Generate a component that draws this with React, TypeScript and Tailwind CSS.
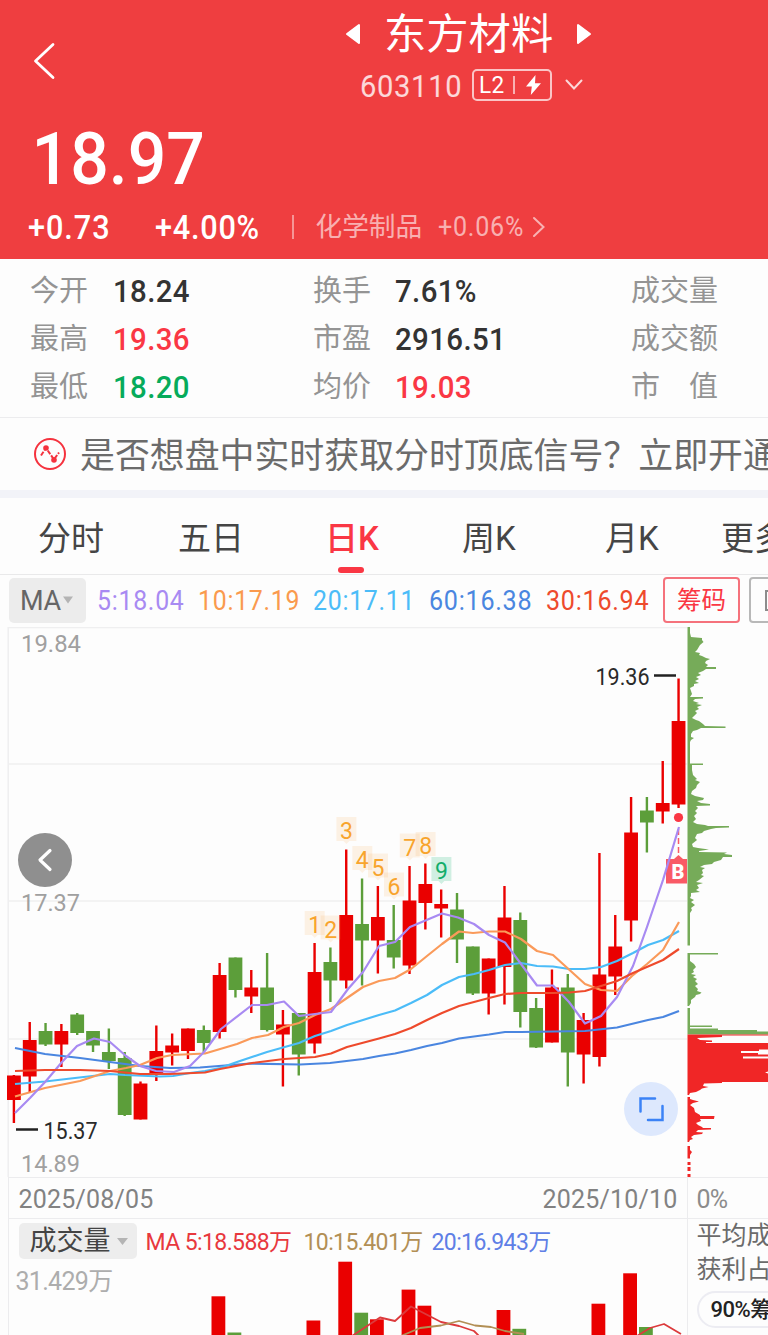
const RED = "#ea0000";
const GREEN = "#5c9e3a";

// [wick top, body top, body bottom, wick bottom, rising]
const candles: [number, number, number, number, boolean][] = [
  [1075, 1075.5, 1100, 1123, true],
  [1022, 1040, 1076.5, 1092, true],
  [1023, 1031, 1044.5, 1046, false],
  [1024, 1031, 1044.5, 1067, true],
  [1013, 1014.5, 1033, 1035, false],
  [1031, 1031, 1045.5, 1052, false],
  [1028.5, 1052, 1061, 1069, false],
  [1052, 1058, 1115, 1116, false],
  [1081.5, 1083.5, 1119.5, 1119.5, true],
  [1025.5, 1051, 1073.5, 1081, true],
  [1033.5, 1045.5, 1052.5, 1065.5, true],
  [1028.5, 1028.5, 1051, 1059, true],
  [1025.5, 1030, 1043, 1052, false],
  [963, 975, 1032, 1038.5, true],
  [957.5, 957.5, 990, 997.5, false],
  [970, 987.5, 996.5, 1013, true],
  [953, 987.5, 1030, 1031.5, false],
  [1010, 1024.5, 1034.5, 1086.5, true],
  [1013, 1013, 1054.5, 1075.5, false],
  [943, 972, 1043.5, 1053.5, true],
  [947.5, 962, 980.5, 1002, false],
  [849.5, 915, 980.5, 988.5, true],
  [878.5, 924, 940.5, 985.5, false],
  [886, 917, 940.5, 973.5, true],
  [905, 940, 957.5, 968.5, false],
  [866, 900.5, 965.5, 974, true],
  [863.5, 884, 903, 929.5, true],
  [889.5, 904, 908.5, 937.5, true],
  [893, 909.5, 939.5, 963, false],
  [946.5, 946.5, 993.5, 995, false],
  [958.5, 958.5, 993.5, 1014.5, true],
  [886, 917.5, 967, 1004.5, true],
  [912.5, 920, 1012, 1027.5, false],
  [998, 1008, 1047.5, 1048, false],
  [969.5, 987.5, 1042.5, 1042.5, true],
  [974, 987.5, 1052.5, 1086.5, false],
  [1013, 1020, 1054.5, 1083.5, true],
  [853, 974.5, 1057, 1066.5, true],
  [915, 946.5, 976.5, 995, true],
  [797, 832.5, 920.5, 941.5, true],
  [797, 810.5, 822.5, 852.5, false],
  [761, 803, 811.5, 823.5, true],
  [678.5, 721, 804.5, 808, true],
];

const maLines = [
  {
    color: "#4a86e0",
    points:
      "15,1048 45,1054 80,1058 110,1062 140,1066 170,1068 200,1067.5 250,1063.5 300,1064.5 330,1063 363,1059 379,1056 395,1053.5 411,1050 427,1046 442,1043 459,1038.5 489,1034.5 505,1032 521,1032 553,1031.5 585,1031 617,1027.5 648,1020 663,1017 679,1011",
  },
  {
    color: "#4bbcf8",
    points:
      "15,1084 45,1081.5 75,1078 110,1074 125,1075 160,1076.5 173,1076 190,1073 205,1071 220,1068 237,1062 267,1052 283,1047.5 299,1043 315,1036 331,1031 347,1025 363,1020 379,1015 395,1010.5 411,1003 427,995 442,985 459,977 474,974 489,970 505,965 521,963 537,966 553,966.5 569,969 585,969 601,967 617,961 633,953 648,945 663,940 679,931",
  },
  {
    color: "#fa9a5a",
    points:
      "15,1096.5 45,1088 80,1081 110,1071 126,1068 140,1065 157,1058 172,1055 205,1053.5 237,1044 252,1038 268,1035 284,1027 299,1023 315,1015 331,1009 363,987 379,981 395,978 411,969 427,956 442,944 459,931.5 473,933 489,931.5 505,931.5 521,939 537,951 553,955 569,969.5 585,984 601,990 617,991 632,976 647,964 663,950 679,922",
  },
  {
    color: "#a88af2",
    points:
      "15,1113 30,1098 46,1081 62,1062 77,1046 94,1038.5 110,1042 126,1056 140,1066 156,1071 174,1072 190,1066 204,1052 221,1029 252,1005 267,1005 284,1001.5 299,1016 315,1014 331,1012 348,989 363,972 379,946 395,942 410,927 442,913.5 458,917.5 474,924 489,935 505,942.5 521,964 537,985.5 553,985.5 569,1002 585,1023.5 601,1016 617,997 633,966 647,927 663,880 679,827",
  },
  {
    color: "#ee4a2c",
    points:
      "15,1071 45,1070 80,1070 110,1071 140,1074 170,1074 205,1072.5 220,1069 252,1063 284,1059 315,1057 331,1053.5 347,1047 379,1038.5 395,1034 411,1028 427,1020 442,1013 459,1006 489,998 505,994 521,993 553,993 569,992.5 585,991 601,986 617,981 633,973 663,960 679,949",
  },
];

const marks: [string, number, number][] = [
  ["1", 304.7, 911],
  ["2", 320.6, 915.5],
  ["3", 336.4, 817],
  ["4", 352.3, 846],
  ["5", 368, 853.5],
  ["6", 384, 872.5],
  ["7", 399.8, 833.5],
  ["8", 415.6, 832],
  ["9", 431.4, 857],
];

const chipsGreen = [
  "687.5,627 690,627 690,633 691,637 702,638 702,640 703.5,642 700,645 697,650 695,652 700,653 699,655 702,656 706,658 710,659 706,661 705,663 708,665 706,667 716,667 716,669 706,669 703,671 698,673 701,675 696,677 699,679 695,681 699,683 694,684 694,686 690,688 691,691 692,694 690,697 703,697 703,698.5 695,699 693,701 699,703 696,704 702,705 697,707 699,709 695,711 697,713 694,716 692,718 696,720 699,721 703,724 705,726 725.5,726.5 725.5,728 701,728 697,730 693,731 691,734 691,737 694,738 691,740 690,742 690,763.5 703,763.5 703,765 692,765 692,770 693,775 697,779 695,780 700,782 697,785 696,788 692,791 691,794 695,796 704,798 703,800 697,801 701,803 710,804 710,805.5 696,806 698,808 695,811 697,813 694,816 696,819 693,822 697,824 705,825 708,826 729,826 729,827.5 716,828 711,829 704,831 702,833 697,834 695,838 697,840 692,844 693,847 698,848 709,849.5 699,851 699,852 727,852.5 724,854 732,855 732,857 723,857 721,860 714,862 712,864 704,865 700,867 705,868 702,870 703,873 701,875 704,876 699,880 696,882 703,883 697,885 699,888 696,890 700,892 691,893 691,896 690,898 694,900 691,902 695,905 691,908 692,910 690,913 690,945.5 687.5,945.5",
  "687.5,953 718,953 718,954.5 690,954.5 690,961 694,964 696,967 693,970 694,972 691,974 696,975 693,977 697,979 695,981 698,984 695,986 698,989 697,991 701.5,992.5 700,994 696,995 695,997 691,1000 691,1003 689,1006 687.5,1006",
  "687.5,1008 690,1008 690,1025.5 712,1025.5 712,1027 690,1027 690,1028.5 718,1028.5 718,1030 757,1030 757,1031.5 768,1031.5 768,1034.5 687.5,1034.5",
];

const chipsRed = [
  "687.5,1034.5 768,1034.5 768,1035.5 722,1035.5 722,1037 697,1038 700,1040 712,1040.5 712,1042 706,1042 706,1043 768,1043 768,1049.5 759,1049.5 759,1051 741,1051 741,1053 758,1053 758,1054.5 768,1054.5 768,1056.5 743,1056.5 743,1058.5 768,1058.5 768,1071.5 765,1072.5 768,1073.5 768,1082 722,1082 722,1083 704,1083.5 703,1086 708.5,1087 702,1088.5 700,1090 696,1092 690,1093 689,1095 687.5,1095",
  "687.5,1097 690,1097 690,1099 693,1100 699,1101.5 693,1103 690,1105 694,1108 695,1112 700,1115 700,1116 714.5,1116 714,1119 700,1119 701,1121 696,1123 698,1125 702,1127 703,1128 711,1128 711,1129.5 698,1130 696,1132 703,1132.5 702,1134 694,1135 691,1137 693,1139 690,1140 689,1142 687.5,1142",
  "687.5,1146 690,1146 690,1150 692,1152 690,1155 690,1158.5 687.5,1158.5",
];

// [left, top, rising]
const volumes: [number, number, boolean][] = [
  [211.5, 1296.3, true],
  [227.5, 1332.5, false],
  [306.5, 1320.5, true],
  [338.3, 1261.7, true],
  [354.3, 1312.7, false],
  [370, 1319.3, true],
  [401.6, 1289.6, true],
  [417.5, 1305.7, true],
  [496.6, 1310, true],
  [512.4, 1328.8, false],
  [591.5, 1303.7, true],
  [623.2, 1273.3, true],
  [639, 1327, false],
];

const Header = () => {
  return (
    <header className="flex h-[259px] flex-col bg-[#ef3e40] text-white">
      <div className="flex h-[104px] pt-[10px]">
        <svg className="mt-[32px] ml-[32px] h-[38px] w-[24px]" viewBox="0 0 24 38" fill="none">
          <path d="M21 2.500 3.500 19 21 35.500" stroke="white" strokeWidth="2.800" strokeLinecap="round" strokeLinejoin="round" />
        </svg>
        <div className="ml-[289px]">
          <div className="flex h-[48px] items-center">
            <svg className="h-[22px] w-[16px]" viewBox="0 0 16 22">
              <path d="M14 2v18L2 11Z" fill="white" stroke="white" strokeWidth="2" strokeLinejoin="round" />
            </svg>
            <h1 className="mt-[2px] ml-[23px] w-[169px] text-[42.3px] leading-[48px] font-normal whitespace-nowrap">东方材料</h1>
            <svg className="ml-[23px] h-[22px] w-[16px]" viewBox="0 0 16 22">
              <path d="M2 2v18l12-9Z" fill="white" stroke="white" strokeWidth="2" strokeLinejoin="round" />
            </svg>
          </div>
          <div className="mt-[8px] flex h-[38px] items-center">
            <span className="mt-[4px] ml-[15px] w-[112px] origin-left scale-x-94 text-[31px] tracking-[0.7px] text-white/80">603110</span>
            <div className="flex h-[32px] w-[80px] items-center rounded-[5px] border-2 border-white/70">
              <span className="ml-[5px] w-[34px] origin-left scale-x-94 text-[24px] tracking-[0.5px]">L2</span>
              <span className="h-[18px] w-[1.5px] bg-white/60" />
              <svg className="ml-[10px] h-[20px] w-[17px]" viewBox="0 0 17 20">
                <path d="M10.500 0 1 11.500h5.800L5.800 20 16 8.200h-6Z" fill="white" />
              </svg>
            </div>
            <svg className="ml-[12px] h-[14px] w-[20px]" viewBox="0 0 20 14" fill="none">
              <path d="m2.500 2.500 7.500 8 7.500-8" stroke="white" strokeOpacity="0.8" strokeWidth="2" strokeLinecap="round" />
            </svg>
          </div>
        </div>
      </div>
      <div className="mt-[18px] h-[77px] origin-left scale-x-93 pl-[34px] text-[73px] leading-[74px] font-medium">18.97</div>
      <div className="flex h-[56px] items-center font-medium">
        <span className="mt-[2px] ml-[28px] w-[127px] origin-left scale-x-93 text-[33px] tracking-[1px]">+0.73</span>
        <span className="mt-[2px] w-[137px] origin-left scale-x-93 text-[33px] tracking-[0.8px]">+4.00%</span>
        <span className="h-[24px] w-[1.5px] bg-white/45" />
        <div className="flex items-center font-normal text-white/60">
          <span className="ml-[22px] w-[122px] text-[26.700px]">化学制品</span>
          <span className="w-[94px] origin-left scale-x-93 text-[27px] tracking-[0.8px]">+0.06%</span>
          <svg className="h-[22px] w-[14px]" viewBox="0 0 14 22" fill="none">
            <path d="m2 2 9.500 9L2 20" stroke="currentColor" strokeWidth="2" strokeLinecap="round" />
          </svg>
        </div>
      </div>
    </header>
  );
};

const Stats = () => {
  const rows = [
    ["今开", "18.24", "text-[#333]", "换手", "7.61%", "text-[#333]", "成交量"],
    ["最高", "19.36", "text-[#fa3744]", "市盈", "2916.51", "text-[#333]", "成交额"],
    ["最低", "18.20", "text-[#06ab5b]", "均价", "19.03", "text-[#fa3744]", "市　值"],
  ];
  return (
    <section className="h-[159px] border-b-[1.5px] border-[#ececee] pt-[8px]">
      {rows.map((r) => (
        <div key={r[0]} className="flex h-[48px] items-center text-[29px] whitespace-nowrap text-[#949494]">
          <span className="ml-[30px] w-[83px] pt-[2px]">{r[0]}</span>
          <span className={`w-[200px] origin-left scale-x-92 text-[32px] font-medium tracking-[0.4px] ${r[2]}`}>{r[1]}</span>
          <span className="w-[82px] pt-[2px]">{r[3]}</span>
          <span className={`w-[236px] origin-left scale-x-92 text-[32px] font-medium tracking-[0.4px] ${r[5]}`}>{r[4]}</span>
          <span className="pt-[2px]">{r[6]}</span>
        </div>
      ))}
    </section>
  );
};

const Banner = () => {
  return (
    <section className="flex h-[72px] items-center overflow-hidden">
      <svg className="ml-[33px] h-[34px] w-[34px] shrink-0" viewBox="0 0 34 34" fill="none" stroke="#f5323e" strokeWidth="2">
        <circle cx="17" cy="17" r="15" />
        <path d="m8 18.500 5-7.500 8 11.500 5-7" strokeDasharray="4.500 1.500" />
        <circle cx="13" cy="11" r="2.800" fill="#f5323e" stroke="none" />
        <circle cx="21" cy="23" r="2.800" fill="#f5323e" stroke="none" />
      </svg>
      <p className="mt-[7px] ml-[13px] text-[34.900px] whitespace-nowrap text-[#6b6b6b]">
        是否想盘中实时获取分时顶底信号？立即开通
      </p>
    </section>
  );
};

const Tabs = () => {
  return (
    <nav className="flex h-[77px] border-b-[1.5px] border-[#e9e9ea] text-[33px] leading-[82px] whitespace-nowrap text-[#454545]">
      <span className="ml-[38px] w-[140px] shrink-0">分时</span>
      <span className="w-[147px] shrink-0">五日</span>
      <span className="flex w-[137px] shrink-0 flex-col text-[#fa3744]">
        <b className="h-[69px] font-medium">日K</b>
        <i className="ml-[13px] h-[6px] w-[26px] rounded-full bg-[#fa3744]" />
      </span>
      <span className="w-[143px] shrink-0">周K</span>
      <span className="w-[116px] shrink-0">月K</span>
      <span className="shrink-0">更多</span>
    </nav>
  );
};

const MaBar = () => {
  return (
    <div className="flex h-[52px] items-center overflow-hidden pb-[2px] text-[27px] tracking-[0.8px] whitespace-nowrap">
      <div className="ml-[9px] flex h-[45px] w-[77px] shrink-0 items-center rounded-[5px] bg-[#ececec] pl-[11px]">
        <span className="w-[42px] pt-[2px] text-[27px] tracking-[-0.4px] text-[#666]">MA</span>
        <svg className="h-[8px] w-[12px]" viewBox="0 0 12 8">
          <path d="M1 .5h10L6 7.500Z" fill="#b4b4b4" />
        </svg>
      </div>
      <span className="mt-[2px] ml-[11px] w-[101px] shrink-0 origin-left scale-x-92 text-[#a88af2]">5:18.04</span>
      <span className="mt-[2px] w-[115px] shrink-0 origin-left scale-x-92 text-[#fa9a4e]">10:17.19</span>
      <span className="mt-[2px] w-[116px] shrink-0 origin-left scale-x-92 text-[#4bbcf8]">20:17.11</span>
      <span className="mt-[2px] w-[117px] shrink-0 origin-left scale-x-93 text-[#4a86e0]">60:16.38</span>
      <span className="mt-[2px] w-[117px] shrink-0 origin-left scale-x-93 text-[#ee4a2c]">30:16.94</span>
      <span className="h-[46px] w-[77px] shrink-0 rounded-[4px] border-2 border-[#f5727c] text-center text-[24.500px] leading-[43px] tracking-normal text-[#fa3744]">
        筹码
      </span>
      <span className="ml-[9px] flex h-[46px] w-[77px] shrink-0 items-center rounded-[4px] border-2 border-[#b8b8b8] pl-[14px]">
        <i className="h-[21px] w-[21px] border-2 border-[#8c8c8c]" />
      </span>
    </div>
  );
};

const PriceChart = () => {
  return (
    <div className="relative h-[550px]">
      <svg className="block h-[550px] w-[768px]" viewBox="0 627 768 550">
        <path
          d="M8 627.500H687M8 764H687M8 901H687M8 1039H687M8.200 627V1177"
          stroke="#efeff0"
          strokeWidth="1.500"
          fill="none"
        />
        <g fill="#a0a0a0" fontSize="24.500">
          <text x="21" y="651.500" textLength="60" lengthAdjust="spacingAndGlyphs">19.84</text>
          <text x="21" y="911" textLength="59" lengthAdjust="spacingAndGlyphs">17.37</text>
          <text x="21" y="1171.500" textLength="59" lengthAdjust="spacingAndGlyphs">14.89</text>
        </g>
        {candles.map(([high, top, bottom, low, up], i) => {
          const x = 13.9 + i * 15.825;
          return (
            <g key={i} fill={up ? RED : GREEN}>
              <rect x={x - 1.2} y={high} width="2.400" height={low - high} />
              <rect x={x - 6.9} y={top} width="13.800" height={bottom - top} />
            </g>
          );
        })}
        <path d="M678.500 829V854" stroke="#f95a66" strokeWidth="1.500" strokeDasharray="6 3" />
        <path d="M666 859h8l4.500-4 4.500 4h4v24.500h-21Z" fill="#f95a66" />
        <text x="671.500" y="879" fontSize="20" fontWeight="900" fill="white">B</text>
        <circle cx="678.500" cy="817.500" r="4.600" fill="#fa3744" />
        {maLines.map((l) => (
          <polyline key={l.color} points={l.points} fill="none" stroke={l.color} strokeWidth="2.200" strokeLinejoin="round" />
        ))}
        {marks.map(([n, x, y]) => {
          const last = n === "9";
          return (
            <g key={n}>
              <path
                d={`M${x} ${y}h20v24h-7l-3 3l-3-3h-7Z`}
                fill={last ? "#1fb877" : "#f99b33"}
                fillOpacity={last ? 0.2 : 0.12}
              />
              <text x={x + 10} y={y + 22} textAnchor="middle" fontSize="23" fill={last ? "#12ad6a" : "#f8a42c"}>
                {n}
              </text>
            </g>
          );
        })}
        <g fill="#2a2a2a" fontSize="23.500">
          <text x="595.500" y="684.500" textLength="54" lengthAdjust="spacingAndGlyphs">19.36</text>
          <text x="43.500" y="1138.500" textLength="54" lengthAdjust="spacingAndGlyphs">15.37</text>
          <path d="M654 675.500h22M16 1129.500h22" stroke="#222" strokeWidth="2.300" />
        </g>
        {chipsGreen.map((p) => (
          <polygon key={p} points={p} fill="#76ab59" />
        ))}
        {chipsRed.map((p) => (
          <polygon key={p} points={p} fill="#f02626" />
        ))}
        <path d="M689 1162v3M689 1167v4M689 1174v3" stroke="#f02626" strokeWidth="3" />
      </svg>
      <button className="absolute top-[206px] left-[18px] flex h-[54px] w-[54px] items-center justify-center rounded-full bg-[#8f8f8f]">
        <svg className="h-[24px] w-[16px]" viewBox="0 0 16 24" fill="none">
          <path d="M13 2.500 3 12l10 9.500" stroke="white" strokeWidth="3.200" strokeLinecap="round" strokeLinejoin="round" />
        </svg>
      </button>
      <button className="absolute top-[455px] left-[624px] flex h-[54px] w-[54px] items-center justify-center rounded-full bg-[#dde8fd]">
        <svg className="h-[26px] w-[26px]" viewBox="0 0 26 26" fill="none">
          <path d="M2.500 15.500V2.500H17M10 24h14.500V10" stroke="#3b82f6" strokeWidth="2.500" strokeLinecap="round" />
        </svg>
      </button>
    </div>
  );
};

const Footer = () => {
  return (
    <div className="flex h-[158px] pl-[7.5px]">
      <div className="w-[680px] border-x-[1.5px] border-[#ececee]">
        <div className="flex h-[42px] items-center justify-between border-y-[1.5px] border-[#ececee] pt-[3px] pr-[9px] pl-[10px] text-[25px] tracking-[0.2px] text-[#828282]">
          <span>2025/08/05</span>
          <span>2025/10/10</span>
        </div>
        <div className="relative h-[116px]">
          <div className="flex h-[44px] items-center text-[23px] tracking-[-0.6px] whitespace-nowrap">
            <div className="ml-[10px] flex h-[36px] w-[118px] items-center rounded-[5px] bg-[#ededed] pl-[11px] text-[27px] tracking-normal text-[#444]">
              <span className="w-[87px]">成交量</span>
              <svg className="h-[7px] w-[11px]" viewBox="0 0 11 7">
                <path d="M0 0h11L5.500 7Z" fill="#b4b4b4" />
              </svg>
            </div>
            <span className="mt-[5px] ml-[9px] w-[158px] text-[#e8383d]">MA 5:18.588万</span>
            <span className="mt-[5px] w-[128px] text-[#b28f55]">10:15.401万</span>
            <span className="mt-[5px] text-[#5f7fe6]">20:16.943万</span>
          </div>
          <div className="mt-[4px] ml-[7px] text-[25px] leading-[30px] tracking-[-0.7px] text-[#adadad]">31.429万</div>
          <svg className="absolute top-[36px] left-[-1px] h-[80px] w-[680px]" viewBox="8 1255 680 80">
            {volumes.map(([x, y, up]) => (
              <rect key={x} x={x} y={y} width="13.800" height={1336 - y} fill={up ? RED : GREEN} />
            ))}
            <g fill="none" strokeWidth="1.800" strokeLinejoin="round">
              <path
                d="M352 1336 380 1317.500 395 1321 411 1306.500 441 1322 459 1326 474 1331 479 1336M637 1336 650 1328 664 1324 681 1334"
                stroke="#dc3a3c"
              />
              <path d="M401 1336 420 1328 441 1325.500 459 1321 475 1325.500 491 1327 505 1331 524 1334" stroke="#b28f55" />
            </g>
          </svg>
        </div>
      </div>
      <div className="flex-1 overflow-hidden whitespace-nowrap text-[#6b6b6b]">
        <div className="flex h-[42px] items-center border-y-[1.5px] border-[#ececee] pt-[3px] pl-[9px] text-[25px] tracking-[-0.8px] text-[#8c8c8c]">
          0%
        </div>
        <div className="pl-[9px] text-[25px] leading-[34px]">
          <div>平均成本</div>
          <div>获利占比</div>
        </div>
        <div className="mt-[4px] ml-[9px] flex h-[37px] w-[120px] items-center rounded-full border-2 border-[#ececf2] pl-[12px] text-[22px] font-medium tracking-[-0.5px] text-[#222]">
          90%筹码
        </div>
      </div>
    </div>
  );
};

const App = () => {
  return (
    <main className="h-[1335px] w-[768px] overflow-hidden bg-[#fdfdfd] font-[Roboto,'Noto_Sans_CJK_SC',sans-serif]">
      <Header />
      <Stats />
      <Banner />
      <div className="h-[8px] bg-[#f2f3f8]" />
      <Tabs />
      <MaBar />
      <PriceChart />
      <Footer />
    </main>
  );
};

export default App;
